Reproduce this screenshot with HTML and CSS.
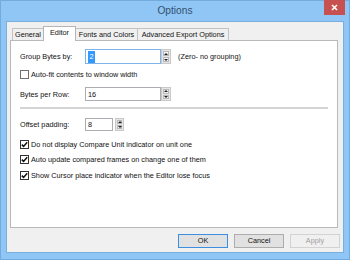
FILE: index.html
```html
<!DOCTYPE html>
<html>
<head>
<meta charset="utf-8">
<link rel="stylesheet" href="styles.css">
</head>
<body>
<div class="window">
  <div class="titlebar">
    <span class="title">Options</span>
    <div class="close">
      <svg width="7" height="7" viewBox="0 0 7 7"><path d="M1 1L6 6M6 1L1 6" stroke="#fff" stroke-width="1.6"/></svg>
    </div>
  </div>
  <div class="client">
    <div class="tabs">
      <div class="tab tab-general">General</div>
      <div class="tab tab-editor active">Editor</div>
      <div class="tab tab-fonts">Fonts and Colors</div>
      <div class="tab tab-export">Advanced Export Options</div>
    </div>
    <div class="panel">
      <div class="row row-group">
        <span class="label">Group Bytes by:</span>
        <div class="input focused wide"><span class="sel">2</span></div>
        <div class="spin"><span class="up"><i></i></span><span class="down"><i></i></span></div>
        <span class="hint">(Zero- no grouping)</span>
      </div>
      <div class="check row-autofit">
        <span class="box"></span><span>Auto-fit contents to window width</span>
      </div>
      <div class="row row-bytes">
        <span class="label">Bytes per Row:</span>
        <div class="input wide">16</div>
        <div class="spin"><span class="up"><i></i></span><span class="down"><i></i></span></div>
      </div>
      <div class="sep"></div>
      <div class="row row-offset">
        <span class="label">Offset padding:</span>
        <div class="input narrow">8</div>
        <div class="spin small"><span class="up"><i></i></span><span class="down"><i></i></span></div>
      </div>
      <div class="check row-c1">
        <span class="box checked"><svg width="7" height="7" viewBox="0 0 7 7"><path d="M0.8 3.6L2.6 5.4L6.2 1.2" fill="none" stroke="#111" stroke-width="1.5"/></svg></span><span>Do not display Compare Unit indicator on unit one</span>
      </div>
      <div class="check row-c2">
        <span class="box checked"><svg width="7" height="7" viewBox="0 0 7 7"><path d="M0.8 3.6L2.6 5.4L6.2 1.2" fill="none" stroke="#111" stroke-width="1.5"/></svg></span><span>Auto update compared frames on change one of them</span>
      </div>
      <div class="check row-c3">
        <span class="box checked"><svg width="7" height="7" viewBox="0 0 7 7"><path d="M0.8 3.6L2.6 5.4L6.2 1.2" fill="none" stroke="#111" stroke-width="1.5"/></svg></span><span>Show Cursor place indicator when the Editor lose focus</span>
      </div>
    </div>
    <div class="buttons">
      <div class="btn default">OK</div>
      <div class="btn">Cancel</div>
      <div class="btn disabled">Apply</div>
    </div>
  </div>
</div>
</body>
</html>
```

FILE: styles.css
```css
* { box-sizing: border-box; }
html, body { margin: 0; padding: 0; }
body {
  width: 350px;
  height: 260px;
  overflow: hidden;
  font-family: "Liberation Sans", Arial, sans-serif;
  font-size: 7.3px;
  color: #111;
}
.window {
  width: 350px;
  height: 260px;
  background: #8fc6f5;
  border: 1px solid #74abde;
  display: flex;
  flex-direction: column;
}
.titlebar {
  height: 20px;
  flex: none;
  display: grid;
  grid-template-columns: 1fr auto 1fr;
  align-items: start;
}
.title {
  grid-column: 2;
  font-size: 10.2px;
  line-height: 20px;
  color: #34506e;
}
.close {
  grid-column: 3;
  justify-self: end;
  width: 21px;
  height: 15px;
  margin-top: -1px;
  margin-right: 4px;
  background: #c75050;
  display: flex;
  align-items: center;
  justify-content: center;
}
.client {
  flex: 1;
  margin: 0 5px 6px 5px;
  background: #f0f0f0;
  border: 1px solid #7aaedd;
  display: flex;
  flex-direction: column;
}
.tabs {
  display: flex;
  align-items: flex-end;
  height: 12px;
  margin: 6px 0 0 5px;
  position: relative;
  z-index: 1;
}
.tab {
  height: 12px;
  border: 1px solid #c3c3c3;
  border-bottom: none;
  background: #f0f0f0;
  text-align: center;
  line-height: 11px;
  white-space: nowrap;
  margin-right: -1px;
}
.tab-general { width: 32px; }
.tab-editor { width: 33px; }
.tab-fonts { width: 63px; }
.tab-export { width: 92px; }
.tab.active {
  height: 15px;
  margin-bottom: -1px;
  background: #fff;
  border-color: #b5b5b5;
  line-height: 12px;
  position: relative;
  z-index: 2;
}
.panel {
  height: 188px;
  flex: none;
  margin: 0 5px 0 3px;
  background: #fff;
  border: 1px solid #b9b9b9;
  padding: 0 9px;
  display: flex;
  flex-direction: column;
}
.row {
  display: flex;
  align-items: center;
}
.label { width: 65px; flex: none; }
.input {
  height: 100%;
  border: 1px solid #abadb3;
  background: #fff;
  padding-left: 2px;
  display: flex;
  align-items: center;
}
.input.wide { width: 76px; }
.input.narrow { width: 28px; }
.input.focused { border-color: #7eb4ea; }
.sel {
  display: inline-block;
  width: 7px;
  height: 12px;
  line-height: 12px;
  background: #3399ff;
  color: #fff;
  text-align: center;
}
.spin {
  width: 10px;
  height: 100%;
  background: #e6e6e6;
  border: 1px solid #c9c9c9;
  display: flex;
  flex-direction: column;
  padding: 1px;
  gap: 1px;
}
.spin.small { width: 9px; margin-left: 2px; }
.spin span {
  flex: 1;
  background: #f4f4f4;
  border: 1px solid #b8b8b8;
  display: flex;
  align-items: center;
  justify-content: center;
}
.spin i {
  width: 0;
  height: 0;
  border-left: 2px solid transparent;
  border-right: 2px solid transparent;
}
.spin .up i { border-bottom: 2px solid #222; }
.spin .down i { border-top: 2px solid #222; }
.hint { margin-left: 7px; }
.row-group { height: 15px; margin-top: 8px; }
.check {
  display: flex;
  align-items: center;
  height: 14px;
  white-space: nowrap;
}
.box {
  width: 9px;
  height: 9px;
  border: 1px solid #707070;
  background: #fff;
  margin-right: 2px;
  display: flex;
  align-items: center;
  justify-content: center;
}
.box.checked { border-color: #333; }
.row-autofit { height: 12px; margin-top: 4px; }
.row-bytes { height: 14px; margin-top: 7px; }
.sep {
  height: 2px;
  background: #d4d4d4;
  margin-top: 6px;
  flex: none;
}
.row-offset { height: 13px; margin-top: 9px; }
.row-c1 { margin-top: 6px; }
.row-c2 { margin-top: 1.5px; }
.row-c3 { margin-top: 1.5px; }
.buttons {
  display: flex;
  justify-content: flex-end;
  gap: 6px;
  margin-top: 6px;
  padding-right: 3px;
}
.btn {
  width: 50px;
  height: 14px;
  border: 1px solid #adadad;
  background: #e1e1e1;
  text-align: center;
  line-height: 12px;
}
.btn.default { border-color: #3c8fe0; }
.btn.disabled { color: #a0a0a0; border-color: #d2d2d2; background: #f0f0f0; }
```
